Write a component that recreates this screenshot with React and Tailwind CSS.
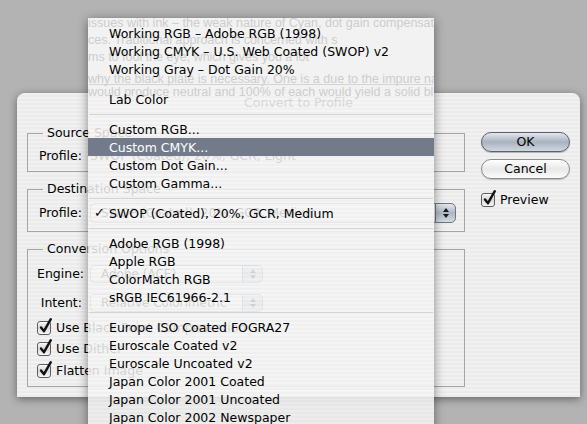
import React from "react";

function Check({ className = "" }) {
  return (
    <svg viewBox="0 0 14 14" className={"absolute overflow-visible " + className}>
      <path d="M3 7.4 L6 11.2 L12.8 -0.8" fill="none" stroke="#111" strokeWidth="2.4" strokeLinecap="round" strokeLinejoin="round" />
    </svg>
  );
}

function CheckBox() {
  return (
    <div className="relative w-[14px] h-[14px] shrink-0 rounded-[3px] border border-[#5d5d5d] bg-gradient-to-b from-[#f4f4f4] via-[#d8d8d8] to-[#f8f8f8] shadow-[inset_0_1px_1px_rgba(255,255,255,0.9)]">
      <Check className="left-[0px] top-[-2px] w-[14px] h-[14px]" />
    </div>
  );
}

function ArrowCap({ h = "h-[20px]" }) {
  return (
    <div className={"w-[21px] " + h + " shrink-0 flex flex-col items-center justify-center gap-[2px] rounded-r-[5px] border border-[#6f7680] bg-gradient-to-b from-[#e3e7ec] via-[#aeb6c2] to-[#d4dae2]"}>
      <svg width="6" height="4" viewBox="0 0 6 4"><path d="M3 0 L6 4 L0 4 Z" fill="#1a1a1a" /></svg>
      <svg width="6" height="4" viewBox="0 0 6 4"><path d="M0 0 L6 0 L3 4 Z" fill="#1a1a1a" /></svg>
    </div>
  );
}

function Popup({ text, w, h = "h-[20px]" }) {
  return (
    <div className={"flex " + w}>
      <div className={"flex-1 " + h + " flex items-center pl-[10px] rounded-l-[5px] border border-r-0 border-[#8b8b8b] bg-gradient-to-b from-white to-[#ececec] text-[12px] leading-[16px]"}>
        {text}
      </div>
      <ArrowCap h={h} />
    </div>
  );
}

const pin =
  "bg-[repeating-linear-gradient(0deg,#ebebeb_0px,#ebebeb_2px,#f1f1f1_2px,#f1f1f1_4px)]";

function Item({ children, checked, active }) {
  return (
    <div
      className={
        "h-[18px] flex items-center pl-[21px] pt-[1px] relative whitespace-nowrap text-[12.5px] leading-[16px] " +
        (active ? "bg-[#737b8a] text-white" : "text-black")
      }
    >
      {checked && <span className="absolute left-[6px] top-[1px] text-[13px] leading-[16px]">✓</span>}
      {children}
    </div>
  );
}

function Sep() {
  return (
    <div className="h-[12px] flex items-center px-px">
      <div className="h-px w-full bg-[#d4d4d4]" />
    </div>
  );
}

function CheckRow({ children }) {
  return (
    <div className="h-[14px] flex items-center gap-[5px] text-[12.5px] leading-[16px] whitespace-nowrap">
      <CheckBox />
      {children}
    </div>
  );
}

export default function App() {
  return (
    <div className="relative w-[587px] h-[424px] overflow-hidden bg-[#b3b3b3] font-['DejaVu_Sans',sans-serif] text-[12px] text-black">
      {/* Dialog window */}
      <div
        className={
          "absolute left-[17px] top-[93px] w-[563px] h-[304px] rounded-t-[8px] flex flex-col shadow-[0_2px_8px_rgba(0,0,0,0.45)] " +
          pin
        }
      >
        <div className="h-[20px] flex items-center justify-center text-[12.5px] text-[#222] pt-[1px]">
          Convert to Profile
        </div>
        <div className="flex items-start pl-[10px]">
          {/* Left column */}
          <div className="w-[438px] flex flex-col gap-[9px] pt-[12px]">
            <fieldset className="h-[47px] border border-[#a5a5a5] px-0">
              <legend className="ml-[15px] px-[4px] leading-[16px] text-[12.5px]">Source Space</legend>
              <div className="flex items-center gap-[8px] pl-[9px] pt-[6px]">
                <div className="w-[45px] text-right text-[12.5px]">Profile:</div>
                <div className="text-[12.5px]">SWOP (Coated), 20%, GCR, Light</div>
              </div>
            </fieldset>
            <fieldset className="h-[51px] border border-[#a5a5a5] px-0">
              <legend className="ml-[15px] px-[4px] leading-[16px] text-[12.5px]">Destination Space</legend>
              <div className="flex items-center gap-[8px] pl-[9px] pt-[6px]">
                <div className="w-[45px] text-right text-[12.5px]">Profile:</div>
                <Popup text="SWOP (Coated), 20%, GCR, Medium" w="w-[366px]" />
              </div>
            </fieldset>
            <fieldset className="h-[146px] border border-[#a5a5a5] px-0">
              <legend className="ml-[15px] px-[4px] leading-[16px] text-[12.5px]">Conversion Options</legend>
              <div className="flex flex-col pl-[9px] pt-[8px]">
                <div className="h-[18px] flex items-center gap-[8px]">
                  <div className="w-[45px] text-right text-[12.5px] leading-[16px]">Engine:</div>
                  <Popup text="Adobe (ACE)" w="w-[173px]" h="h-[18px]" />
                </div>
                <div className="h-[18px] flex items-center gap-[8px] mt-[11px]">
                  <div className="w-[45px] text-right text-[12.5px] leading-[16px]">Intent:</div>
                  <Popup text="Relative Colorimetric" w="w-[173px]" h="h-[18px]" />
                </div>
                <div className="flex flex-col mt-[9px]">
                  <CheckRow>Use Black Point Compensation</CheckRow>
                  <div className="mt-[7px]"><CheckRow>Use Dither</CheckRow></div>
                  <div className="mt-[8px]"><CheckRow>Flatten Image</CheckRow></div>
                </div>
              </div>
            </fieldset>
          </div>
          {/* Right column */}
          <div className="ml-[16px] w-[89px] pt-[19px] flex flex-col">
            <div className="h-[20px] rounded-full border border-[#5b626d] bg-gradient-to-b from-[#e4e8ee] via-[#a9b2bf] to-[#d0d7e0] flex items-center justify-center text-[12.5px] shadow-[0_1px_1px_rgba(0,0,0,0.25)]">
              OK
            </div>
            <div className="mt-[7px] h-[20px] rounded-full border border-[#8c8c8c] bg-gradient-to-b from-white via-[#e8e8e8] to-[#fbfbfb] flex items-center justify-center text-[12.5px] shadow-[0_1px_1px_rgba(0,0,0,0.2)]">
              Cancel
            </div>
            <div className="mt-[14px] h-[14px] flex items-center gap-[5px] text-[12.5px] leading-[16px]">
              <CheckBox />
              Preview
            </div>
          </div>
        </div>
      </div>

      {/* Popup menu */}
      <div className="absolute left-[88px] top-[18px] w-[346px] h-[420px] shadow-[0_2px_10px_rgba(0,0,0,0.45)] overflow-hidden">
        <div className="absolute inset-0 bg-[repeating-linear-gradient(0deg,rgba(240,240,240,0.86)_0px,rgba(240,240,240,0.86)_2px,rgba(246,246,246,0.86)_2px,rgba(246,246,246,0.86)_4px)]" />
        <div className="absolute left-0 top-0 w-full h-[75px] bg-[#f2f2f2] font-['Liberation_Sans',sans-serif] text-[12.5px] leading-[17px] text-[#cdcdcd] whitespace-nowrap">
          <div className="-mt-[3px]">issues with ink – the weak nature of Cyan, dot gain compensation</div>
          <div>ces. Traditional approach is concerned with s</div>
          <div>ms to fool the eye, which gives you a lot</div>
          <div className="mt-[5px]">why the black plate is necessary. One is a due to the impure nat</div>
          <div className="-mt-[4px]">would produce neutral and 100% of each would yield a solid bl</div>
        </div>
        <div className="relative flex flex-col pt-[6px]">
          <Item>Working RGB – Adobe RGB (1998)</Item>
          <Item>Working CMYK – U.S. Web Coated (SWOP) v2</Item>
          <Item>Working Gray – Dot Gain 20%</Item>
          <Sep />
          <Item>Lab Color</Item>
          <Sep />
          <Item>Custom RGB...</Item>
          <Item active>Custom CMYK...</Item>
          <Item>Custom Dot Gain...</Item>
          <Item>Custom Gamma...</Item>
          <Sep />
          <Item checked>SWOP (Coated), 20%, GCR, Medium</Item>
          <Sep />
          <Item>Adobe RGB (1998)</Item>
          <Item>Apple RGB</Item>
          <Item>ColorMatch RGB</Item>
          <Item>sRGB IEC61966-2.1</Item>
          <Sep />
          <Item>Europe ISO Coated FOGRA27</Item>
          <Item>Euroscale Coated v2</Item>
          <Item>Euroscale Uncoated v2</Item>
          <Item>Japan Color 2001 Coated</Item>
          <Item>Japan Color 2001 Uncoated</Item>
          <Item>Japan Color 2002 Newspaper</Item>
        </div>
      </div>
    </div>
  );
}
